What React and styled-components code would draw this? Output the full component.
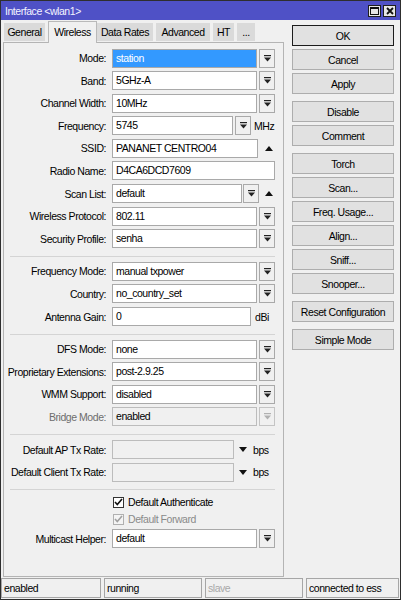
import React from "react";
import styled, { createGlobalStyle } from "styled-components";

const Global = createGlobalStyle`
  body {
    margin: 0;
    background: #fff;
  }
`;

const FONT = `"Liberation Sans", Arial, sans-serif`;

const Window = styled.div`
  width: 401px;
  height: 600px;
  box-sizing: border-box;
  border: 1px solid #2e2e2e;
  background: #f0f0f0;
  display: flex;
  flex-direction: column;
  font-family: ${FONT};
  font-size: 10.5px;
  letter-spacing: -0.45px;
  color: #000;
  overflow: hidden;
`;

const TitleBar = styled.div`
  height: 19px;
  background: #4f51c6;
  color: #f4f4ff;
  display: flex;
  align-items: center;
  justify-content: space-between;
  padding: 0 4px 0 4px;
  flex-shrink: 0;
`;

const TitleButtons = styled.div`
  display: flex;
  gap: 2px;
  padding-top: 1px;
`;

const TitleBtn = styled.div`
  width: 13px;
  height: 12px;
  box-sizing: border-box;
  background: #e6e6e6;
  border: 1px solid #1e1e1e;
  display: flex;
  align-items: center;
  justify-content: center;
`;

const Main = styled.div`
  flex: 1;
  display: flex;
  padding: 0 5px 0 2px;
  min-height: 0;
`;

const LeftCol = styled.div`
  width: 281px;
  display: flex;
  flex-direction: column;
`;

const Tabs = styled.div`
  height: 22px;
  display: flex;
  align-items: flex-end;
  padding-left: 1px;
  flex-shrink: 0;
`;

const Tab = styled.div`
  box-sizing: border-box;
  display: flex;
  align-items: center;
  justify-content: center;
  white-space: nowrap;
  width: ${(p) => p.$w}px;
  margin-right: ${(p) => (p.$active ? 0 : 3)}px;
  height: ${(p) => (p.$active ? 22 : 18)}px;
  margin-bottom: ${(p) => (p.$active ? -1 : 1)}px;
  background: ${(p) => (p.$active ? "#f0f0f0" : "#dadada")};
  border: ${(p) => (p.$active ? "1px solid #b9b9b9" : "none")};
  border-bottom: none;
  position: relative;
  z-index: 1;
  padding-bottom: ${(p) => (p.$active ? 2 : 0)}px;
`;

const Panel = styled.div`
  flex: 1;
  display: flex;
  flex-direction: column;
  border: 1px solid #b4b4b4;
  margin-bottom: 1px;
  padding-top: 5.5px;
`;

const Row = styled.div`
  display: flex;
  align-items: center;
  height: 19px;
  flex-shrink: 0;
  margin-bottom: 3.6px;
`;

const Label = styled.div`
  width: 102px;
  margin-right: 6px;
  text-align: right;
  white-space: nowrap;
  color: ${(p) => (p.$disabled ? "#6d6d6d" : "#000")};
`;

const Field = styled.div`
  width: ${(p) => p.$w}px;
  height: 19px;
  box-sizing: border-box;
  border: 1px solid ${(p) => (p.$muted ? "#bcbcbc" : "#a9a9a9")};
  background: ${(p) => (p.$selected ? "#3399ff" : p.$muted ? "#f0f0f0" : "#fff")};
  color: ${(p) => (p.$selected ? "#fff" : "#000")};
  padding-left: 3px;
  line-height: 17px;
  white-space: nowrap;
  overflow: hidden;
`;

const DropBtn = styled.div`
  width: 16px;
  height: 19px;
  box-sizing: border-box;
  margin-left: ${(p) => p.$ml ?? 2}px;
  border: 1px solid ${(p) => (p.$disabled ? "#c4c4c4" : "#a9a9a9")};
  background: #f0f0f0;
  display: flex;
  align-items: center;
  justify-content: center;
`;

const Unit = styled.span`
  margin-left: ${(p) => p.$ml ?? 4}px;
`;

const Arrow = styled.svg`
  margin-left: ${(p) => p.$ml}px;
  flex-shrink: 0;
`;

const Separator = styled.div`
  height: 1px;
  flex-shrink: 0;
  background: #d4d4d4;
  margin: 4px 8px 5px 6px;
`;

const CheckRow = styled.div`
  display: flex;
  align-items: center;
  height: 14px;
  flex-shrink: 0;
  margin-bottom: 3px;
  padding-left: 109px;
  color: ${(p) => (p.$disabled ? "#8a8a8a" : "#000")};
`;

const CheckBox = styled.div`
  width: 11px;
  height: 11px;
  box-sizing: border-box;
  border: 1px solid ${(p) => (p.$disabled ? "#b0b0b0" : "#333")};
  background: ${(p) => (p.$disabled ? "#f4f4f4" : "#fff")};
  margin-right: 4px;
  display: flex;
  align-items: center;
  justify-content: center;
`;

const RightCol = styled.div`
  width: 102px;
  margin-left: 8px;
  padding-top: 5px;
  display: flex;
  flex-direction: column;
`;

const Button = styled.div`
  height: 21px;
  flex-shrink: 0;
  box-sizing: border-box;
  border: 1px solid ${(p) => (p.$primary ? "#1c1c1c" : "#adadad")};
  background: #e1e1e1;
  display: flex;
  align-items: center;
  justify-content: center;
  margin-bottom: 3px;
  margin-top: ${(p) => (p.$group ? 4 : 0)}px;
  white-space: nowrap;
`;

const StatusBar = styled.div`
  height: 20px;
  display: grid;
  grid-template-columns: 100px 98px 98px 1fr;
  gap: 3px;
  padding: 0 1px 1px 0;
  flex-shrink: 0;
`;

const StatusCell = styled.div`
  box-sizing: border-box;
  border: 1px solid #a6a6a6;
  padding-left: 2px;
  line-height: 18px;
  white-space: nowrap;
  color: ${(p) => (p.$dim ? "#a8a8a8" : "#000")};
`;

const DropIcon = ({ disabled }) => (
  <svg width="7" height="7" viewBox="0 0 7 7">
    <rect x="0" y="0" width="7" height="1.2" fill={disabled ? "#b0b0b0" : "#222"} />
    <polygon points="0,2.5 7,2.5 3.5,6.5" fill={disabled ? "#b0b0b0" : "#222"} />
  </svg>
);

const Up = ({ ml }) => (
  <Arrow $ml={ml} width="8" height="5" viewBox="0 0 8 5">
    <polygon points="0,5 8,5 4,0" fill="#111" />
  </Arrow>
);

const Down = ({ ml }) => (
  <Arrow $ml={ml} width="8" height="5" viewBox="0 0 8 5">
    <polygon points="0,0 8,0 4,5" fill="#111" />
  </Arrow>
);

const Check = ({ disabled }) => (
  <svg width="9" height="8" viewBox="0 0 9 8">
    <path d="M1 4 L3.3 6.5 L8 1" fill="none" stroke={disabled ? "#a0a0a0" : "#111"} strokeWidth="1.6" />
  </svg>
);

const SelectRow = ({ label, value, selected, disabled }) => (
  <Row>
    <Label $disabled={disabled}>{label}</Label>
    <Field $w={145} $selected={selected} $muted={disabled}>{value}</Field>
    <DropBtn $disabled={disabled}>
      <DropIcon disabled={disabled} />
    </DropBtn>
  </Row>
);

const tabs = [
  { name: "General", w: 41 },
  { name: "Wireless", w: 49, active: true },
  { name: "Data Rates", w: 56 },
  { name: "Advanced", w: 54 },
  { name: "HT", w: 21 },
  { name: "...", w: 18 },
];

const buttons = [
  { t: "OK", primary: true },
  { t: "Cancel" },
  { t: "Apply" },
  { t: "Disable", group: true },
  { t: "Comment" },
  { t: "Torch", group: true },
  { t: "Scan..." },
  { t: "Freq. Usage..." },
  { t: "Align..." },
  { t: "Sniff..." },
  { t: "Snooper..." },
  { t: "Reset Configuration", group: true },
  { t: "Simple Mode", group: true },
];

const App = () => {
  return (
    <>
      <Global />
      <Window>
        <TitleBar>
          <span>Interface &lt;wlan1&gt;</span>
          <TitleButtons>
            <TitleBtn>
              <svg width="9" height="8" viewBox="0 0 9 8">
                <rect x="0.5" y="0.5" width="8" height="7" fill="none" stroke="#111" />
                <rect x="0" y="0" width="9" height="2" fill="#111" />
              </svg>
            </TitleBtn>
            <TitleBtn>
              <svg width="8" height="8" viewBox="0 0 8 8">
                <path d="M1 1 L7 7 M7 1 L1 7" stroke="#111" strokeWidth="1.8" />
              </svg>
            </TitleBtn>
          </TitleButtons>
        </TitleBar>
        <Main>
          <LeftCol>
            <Tabs>
              {tabs.map((t) => (
                <Tab key={t.name} $w={t.w} $active={t.active}>
                  {t.name}
                </Tab>
              ))}
            </Tabs>
            <Panel>
              <SelectRow label="Mode:" value="station" selected />
              <SelectRow label="Band:" value="5GHz-A" />
              <SelectRow label="Channel Width:" value="10MHz" />
              <Row>
                <Label>Frequency:</Label>
                <Field $w={121}>5745</Field>
                <DropBtn>
                  <DropIcon />
                </DropBtn>
                <Unit $ml={3}>MHz</Unit>
              </Row>
              <Row>
                <Label>SSID:</Label>
                <Field $w={146}>PANANET CENTRO04</Field>
                <Up ml={7} />
              </Row>
              <Row>
                <Label>Radio Name:</Label>
                <Field $w={163}>D4CA6DCD7609</Field>
              </Row>
              <Row>
                <Label>Scan List:</Label>
                <Field $w={130}>default</Field>
                <DropBtn $ml={1}>
                  <DropIcon />
                </DropBtn>
                <Up ml={6} />
              </Row>
              <SelectRow label="Wireless Protocol:" value="802.11" />
              <SelectRow label="Security Profile:" value="senha" />
              <Separator />
              <SelectRow label="Frequency Mode:" value="manual txpower" />
              <SelectRow label="Country:" value="no_country_set" />
              <Row>
                <Label>Antenna Gain:</Label>
                <Field $w={139}>0</Field>
                <Unit>dBi</Unit>
              </Row>
              <Separator />
              <SelectRow label="DFS Mode:" value="none" />
              <SelectRow label="Proprietary Extensions:" value="post-2.9.25" />
              <SelectRow label="WMM Support:" value="disabled" />
              <SelectRow label="Bridge Mode:" value="enabled" disabled />
              <Separator />
              <Row>
                <Label>Default AP Tx Rate:</Label>
                <Field $w={122} $muted />
                <Down ml={5} />
                <Unit $ml={6}>bps</Unit>
              </Row>
              <Row>
                <Label>Default Client Tx Rate:</Label>
                <Field $w={122} $muted />
                <Down ml={5} />
                <Unit $ml={6}>bps</Unit>
              </Row>
              <Separator />
              <CheckRow>
                <CheckBox>
                  <Check />
                </CheckBox>
                Default Authenticate
              </CheckRow>
              <CheckRow $disabled>
                <CheckBox $disabled>
                  <Check disabled />
                </CheckBox>
                Default Forward
              </CheckRow>
              <SelectRow label="Multicast Helper:" value="default" />
            </Panel>
          </LeftCol>
          <RightCol>
            {buttons.map((b) => (
              <Button key={b.t} $primary={b.primary} $group={b.group}>
                {b.t}
              </Button>
            ))}
          </RightCol>
        </Main>
        <StatusBar>
          <StatusCell>enabled</StatusCell>
          <StatusCell>running</StatusCell>
          <StatusCell $dim>slave</StatusCell>
          <StatusCell>connected to ess</StatusCell>
        </StatusBar>
      </Window>
    </>
  );
};

export default App;
